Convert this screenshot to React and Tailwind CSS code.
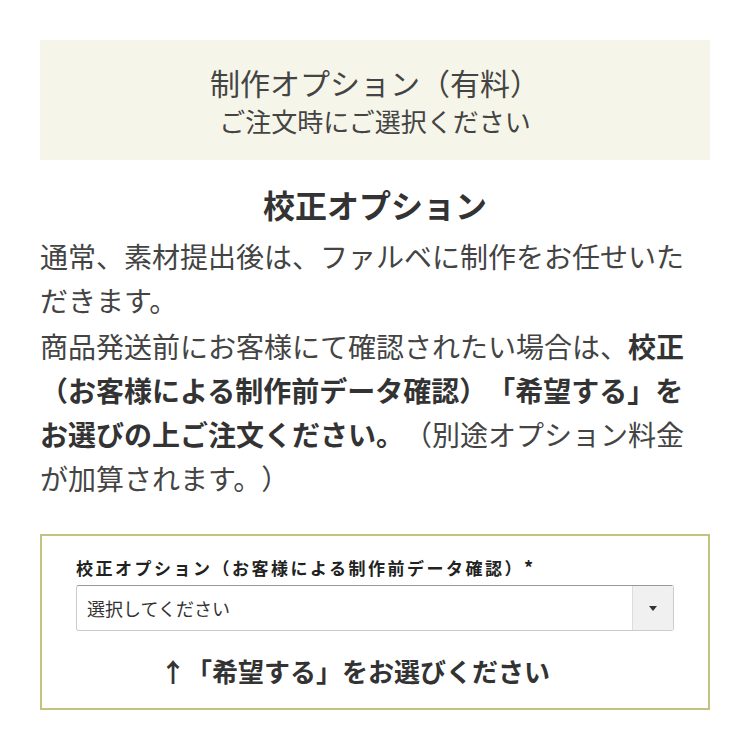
export default function App() {
  const jp = { fontFamily: '"Noto Sans CJK JP", "Noto Sans", sans-serif' };
  return (
    <div className="bg-white w-[750px] h-[750px] px-10 pt-10 text-[#333] [text-spacing-trim:space-all]" style={jp}>
      {/* header */}
      <div className="bg-[#f6f5e9] h-[120px] flex flex-col items-center justify-center text-[#444]">
        <div className="text-[30px] leading-[42px]">制作オプション（有料）</div>
        <div className="text-[26px] leading-[36px]">ご注文時にご選択ください</div>
      </div>

      <h2 className="mt-[22px] text-center text-[32px] font-bold leading-[44px] text-[#333]">校正オプション</h2>

      <div className="mt-[8px] text-[28px] leading-[44px] text-[#444]">
        <p>通常、素材提出後は、ファルベに制作をお任せいただきます。</p>
        <p className="mt-[2px]">
          商品発送前にお客様にて確認されたい場合は、
          <b className="font-bold text-[#333]">校正（お客様による制作前データ確認）「希望する」をお選びの上ご注文ください。</b>
          （別途オプション料金が加算されます。）
        </p>
      </div>

      {/* form */}
      <div className="mt-[34px] border-2 border-[#c3c27e] h-[176px] px-[34px] pt-[18px]">
        <label className="block text-[17px] font-bold tracking-[2.5px] leading-[26px] text-[#222]">
          校正オプション（お客様による制作前データ確認）<span className="tracking-normal text-[18px]">*</span>
        </label>
        <div className="mt-[4px] h-[46px] flex border border-[#ccc] border-t-[#999] rounded-[3px] bg-white">
          <div className="flex-1 flex items-center pl-[10px] text-[18px] text-[#333]">選択してください</div>
          <div className="w-[41px] flex items-center justify-center bg-[#f0f0f0] border-l border-[#ddd]">
            <svg width="8" height="5" viewBox="0 0 8 5"><path d="M0 0h8L4 5z" fill="#333" /></svg>
          </div>
        </div>
        <div className="mt-[22px] pr-[40px] text-center text-[26px] font-bold leading-[36px] text-[#333]">
          ↑「希望する」をお選びください
        </div>
      </div>
    </div>
  );
}
